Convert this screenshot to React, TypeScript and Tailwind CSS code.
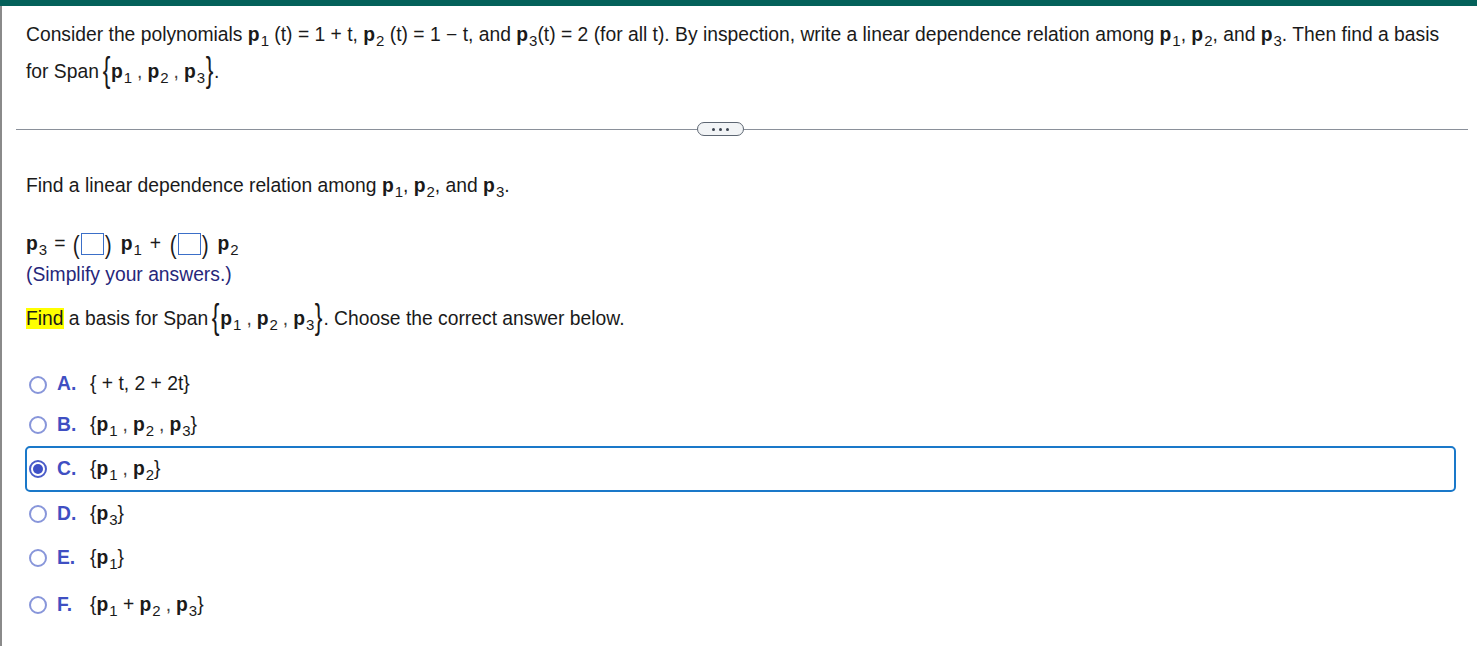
import React from "react";

function P({ n }: { n: string }) {
  return (
    <span className="whitespace-nowrap">
      <span className="font-bold">p</span>
      <span className="text-[15px] relative top-[5px] ml-[1px]">{n}</span>
    </span>
  );
}

function Comma() {
  return <span className="text-[#444] mx-[5px]">,</span>;
}

function Brace({ c }: { c: string }) {
  return (
    <span className="inline-block h-[20px] leading-[20px] align-baseline overflow-visible">
      <span className="inline-block text-[27px] leading-[20px] font-light relative top-[1px] scale-y-[1.3] scale-x-[0.85]">
        {c}
      </span>
    </span>
  );
}

function Span3() {
  return (
    <span className="whitespace-nowrap">
      Span
      <span className="ml-[3px]">
        <Brace c="{" />
      </span>
      <P n="1" />
      <Comma />
      <P n="2" />
      <Comma />
      <P n="3" />
      <Brace c="}" />
    </span>
  );
}

function Paren({ c }: { c: string }) {
  return (
    <span className="inline-block text-[26px] leading-none font-light scale-x-[0.8] relative top-[1px]">{c}</span>
  );
}

function AnswerBox() {
  return (
    <span className="inline-flex items-center">
      <Paren c="(" />
      <span className="inline-block w-[23px] h-[22px] border border-[#3b6fc8] bg-white align-middle" />
      <Paren c=")" />
    </span>
  );
}

function Radio({ checked }: { checked?: boolean }) {
  return (
    <span
      className={
        "inline-flex items-center justify-center w-[18px] h-[18px] rounded-full border-2 bg-white " +
        (checked ? "border-[#4a5cc9]" : "border-[#8896da]")
      }
    >
      {checked ? <span className="w-[10px] h-[10px] rounded-full bg-[#3e50c6]" /> : null}
    </span>
  );
}

function Option({
  letter,
  children,
  checked,
  h,
  mt,
}: {
  letter: string;
  children: React.ReactNode;
  checked?: boolean;
  h: string;
  mt?: string;
}) {
  return (
    <div
      className={
        "flex items-center " +
        h +
        " " +
        (mt ?? "") +
        " " +
        (checked
          ? "border-2 border-[#1a78c9] rounded-[5px] w-[1431px] pl-[2px]"
          : "pl-[4px]")
      }
    >
      <Radio checked={checked} />
      <span className="ml-[10px] w-[33px] font-bold text-[#3f4fc2]">{letter}</span>
      <span>{children}</span>
    </div>
  );
}

export default function App() {
  return (
    <div className="w-[1477px] h-[646px] bg-white overflow-hidden font-['Liberation_Sans',Arial,sans-serif] text-[19.3px] text-[#1a1a1a]">
      <div className="h-[6px] bg-[#04615a]" />
      <div className="h-[640px] border-l-2 border-[#8a8a8a]">
        <div className="pl-[24px] pr-[10px] pt-[11px] leading-[36px]">
          <div>
            Consider the polynomials <P n="1" /> (t) = 1 + t, <P n="2" /> (t) = 1 − t, and <P n="3" />
            (t) = 2 (for all t). By inspection, write a linear dependence relation among <P n="1" />,{" "}
            <P n="2" />, and <P n="3" />. Then find a basis
            <br />
            for <Span3 />.
          </div>
        </div>

        <div className="mt-[31px] ml-[14px] mr-[9px] flex items-center h-[14px]">
          <div className="w-[681px] h-px bg-[#8a909a]" />
          <div className="w-[47px] h-[14px] rounded-full border border-[#5d6672] bg-[#f2f4f6] flex items-center justify-center gap-[4px]">
            <span className="w-[3px] h-[3px] rounded-full bg-[#3c4450]" />
            <span className="w-[3px] h-[3px] rounded-full bg-[#3c4450]" />
            <span className="w-[3px] h-[3px] rounded-full bg-[#3c4450]" />
          </div>
          <div className="flex-1 h-px bg-[#8a909a]" />
        </div>

        <div className="pl-[24px] mt-[32px] leading-[36px]">
          <div>
            Find a linear dependence relation among <P n="1" />, <P n="2" />, and <P n="3" />.
          </div>
          <div className="mt-[21px] flex items-center h-[36px]">
            <P n="3" />
            <span className="mx-[7px]">=</span>
            <AnswerBox />
            <span className="ml-[8px]">
              <P n="1" />
            </span>
            <span className="mx-[8px]">+</span>
            <AnswerBox />
            <span className="ml-[8px]">
              <P n="2" />
            </span>
          </div>
          <div className="text-[#27277a] leading-[26px]">(Simplify your answers.)</div>
          <div className="mt-[13px]">
            <span className="bg-[#ffff00]">Find</span> a basis for <Span3 />. Choose the correct answer below.
          </div>
        </div>

        <div className="pl-[23px] mt-[27px]">
          <Option letter="A." h="h-[39px]">
            {"{ + t, 2 + 2t}"}
          </Option>
          <Option letter="B." h="h-[42px]">
            {"{"}
            <P n="1" />
            <Comma />
            <P n="2" />
            <Comma />
            <P n="3" />
            {"}"}
          </Option>
          <Option letter="C." h="h-[46px]" checked>
            {"{"}
            <P n="1" />
            <Comma />
            <P n="2" />
            {"}"}
          </Option>
          <Option letter="D." h="h-[42px]" mt="mt-[1px]">
            {"{"}
            <P n="3" />
            {"}"}
          </Option>
          <Option letter="E." h="h-[42px]" mt="mt-[2px]">
            {"{"}
            <P n="1" />
            {"}"}
          </Option>
          <Option letter="F." h="h-[42px]" mt="mt-[5px]">
            {"{"}
            <P n="1" /> + <P n="2" />
            <Comma />
            <P n="3" />
            {"}"}
          </Option>
        </div>
      </div>
    </div>
  );
}
